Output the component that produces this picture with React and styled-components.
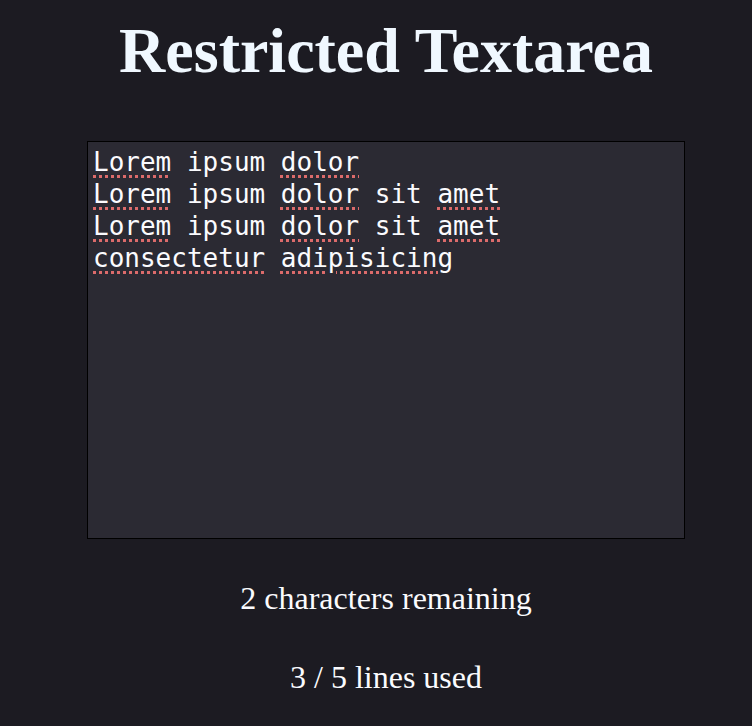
import React from "react";
import styled, { createGlobalStyle } from "styled-components";

const Global = createGlobalStyle`
  html, body { margin: 0; padding: 0; background: #1c1b22; }
  body { font-family: "Liberation Serif", "Times New Roman", serif; color: #fbfbfe; }
`;

const Page = styled.main`
  display: flex;
  flex-direction: column;
  align-items: center;
  padding: 0 0 0 20px;
  min-height: 726px;
  box-sizing: border-box;
`;

const Title = styled.h1`
  margin: 14px 0 0;
  font-size: 64px;
  font-weight: bold;
  color: #f0f8ff;
  line-height: 74px;
`;

const Box = styled.div`
  margin-top: 53px;
  width: 598px;
  height: 398px;
  box-sizing: border-box;
  border: 1px solid #000;
  background: #2b2a33;
  padding: 4px 5px;
  font-family: "DejaVu Sans Mono", Menlo, monospace;
  font-size: 26px;
  line-height: 32px;
  color: #fbfbfe;
  white-space: pre-wrap;
  overflow: hidden;
`;

const Misspelled = styled.span`
  text-decoration: underline dotted #dc6b6b;
  text-decoration-thickness: 3px;
  text-underline-offset: 4px;
`;

const Info = styled.p`
  margin: ${(p) => p.$top}px 0 0;
  font-size: 32px;
  line-height: 36px;
  color: #fbfbfe;
`;

const lines = [
  ["Lorem", " ipsum ", "dolor"],
  ["Lorem", " ipsum ", "dolor", " sit ", "amet"],
  ["Lorem", " ipsum ", "dolor", " sit ", "amet"],
  ["consectetur", " ", "adipisicing"],
];

export default function App() {
  return (
    <>
      <Global />
      <Page>
        <Title>Restricted Textarea</Title>
        <Box role="textbox" aria-multiline="true">
          {lines.map((parts, i) => (
            <div key={i}>
              {parts.map((p, j) =>
                j % 2 === 0 ? <Misspelled key={j}>{p}</Misspelled> : <span key={j}>{p}</span>
              )}
            </div>
          ))}
        </Box>
        <Info $top={41}>2 characters remaining</Info>
        <Info $top={43}>3 / 5 lines used</Info>
      </Page>
    </>
  );
}
